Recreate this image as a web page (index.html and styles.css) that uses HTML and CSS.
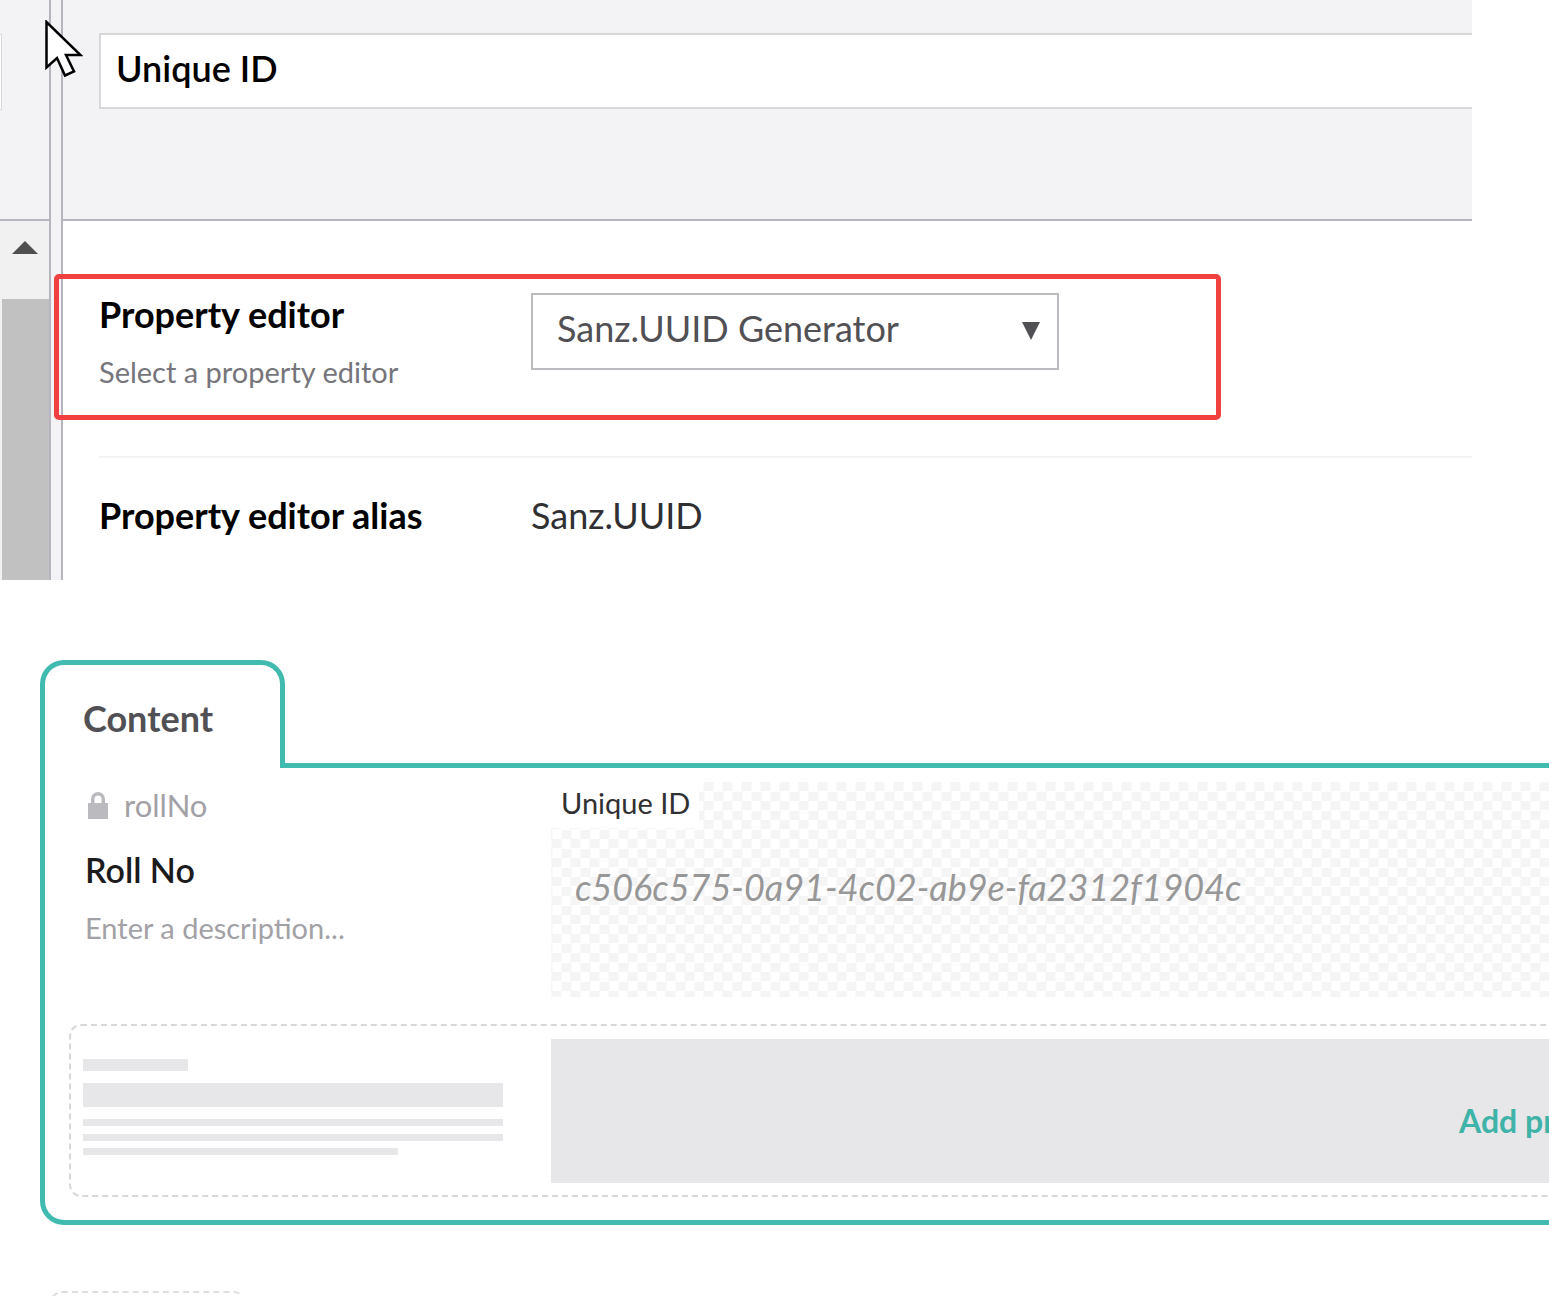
FILE: index.html
```html
<!DOCTYPE html>
<html lang="en">
<head>
  <meta charset="UTF-8">
  <title>Unique ID property editor</title>
  <link rel="stylesheet" href="styles.css">
</head>
<body>
  <section class="editor">
    <aside class="side">
      <div class="side-head"><div class="side-input"></div></div>
      <div class="side-scroll">
        <div class="scroll-up"></div>
        <div class="scroll-thumb"></div>
      </div>
    </aside>
    <div class="gutter"></div>
    <main class="pane">
      <div class="pane-head">
        <div class="name-input">Unique ID</div>
      </div>
      <div class="pane-body">
        <div class="row row-editor">
          <div class="row-label">
            <div class="row-title">Property editor</div>
            <div class="row-desc">Select a property editor</div>
          </div>
          <div class="select">
            <span class="select-text">Sanz.UUID Generator</span>
            <span class="select-arrow"></span>
          </div>
        </div>
        <div class="row row-alias">
          <div class="row-label"><div class="row-title">Property editor alias</div></div>
          <div class="row-value">Sanz.UUID</div>
        </div>
      </div>
    </main>
    <div class="highlight"></div>
    <svg class="cursor" width="38" height="58" viewBox="0 0 38 58">
      <path d="M1.5 2 V47.5 L12 38 L20 55.5 L29 51.5 L21 35 H35.5 Z" fill="#fff" stroke="#000" stroke-width="2.5"/>
    </svg>
  </section>

  <section class="doctype">
    <div class="tab-row">
      <div class="tab">Content</div>
      <div class="tab-line"></div>
    </div>
    <div class="group">
      <div class="prop">
        <div class="prop-label">
          <div class="prop-alias">
            <svg class="lock" width="22" height="28" viewBox="0 0 22 28">
              <path d="M1 12 H4 V8 A7 7 0 0 1 18 8 V12 H21 V28 H1 Z M7.5 12 H14.5 V8 A3.5 3.5 0 0 0 7.5 8 Z" fill="#bbbabf" fill-rule="evenodd"/>
            </svg>
            <span>rollNo</span>
          </div>
          <div class="prop-name">Roll No</div>
          <div class="prop-desc">Enter a description...</div>
        </div>
        <div class="prop-preview">
          <div class="preview-name">Unique ID</div>
          <div class="preview-value">c506c575-0a91-4c02-ab9e-fa2312f1904c</div>
        </div>
      </div>
      <div class="add-prop">
        <div class="ghost">
          <div class="ghost-bar g1"></div>
          <div class="ghost-bar g2"></div>
          <div class="ghost-bar g3"></div>
          <div class="ghost-bar g3 g4"></div>
          <div class="ghost-bar g5"></div>
        </div>
        <div class="add-block">Add property</div>
      </div>
    </div>
    <div class="next-tab"></div>
  </section>
</body>
</html>
```

FILE: styles.css
```css
html, body {
  margin: 0;
  padding: 0;
  height: 1296px;
  overflow: hidden;
  background: #fff;
}
body {
  font-family: 'Lato', sans-serif;
  color: #1b1b1d;
}

/* top screenshot */
.editor {
  position: relative;
  display: flex;
  width: 1472px;
  height: 580px;
  overflow: hidden;
}
.side {
  width: 49px;
  flex: none;
  border-right: 2px solid #b5b4bf;
  display: flex;
  flex-direction: column;
}
.side-head {
  height: 221px;
  padding-top: 34px;
  box-sizing: border-box;
  background: #f3f3f5;
  border-bottom: 2px solid #b5b4bf;
}
.side-input {
  width: 1px;
  height: 74px;
  background: #fff;
  border: 1px solid #d8d7d9;
  border-left: 0;
}
.side-scroll {
  flex: 1;
  background: #f1f1f1;
  display: flex;
  flex-direction: column;
  align-items: center;
}
.scroll-up {
  margin-top: 20px;
  width: 0;
  height: 0;
  border-left: 13px solid transparent;
  border-right: 13px solid transparent;
  border-bottom: 13px solid #505050;
}
.scroll-thumb {
  margin-top: 45px;
  margin-left: 2px;
  align-self: stretch;
  flex: 1;
  background: #c1c1c1;
}
.gutter {
  width: 10px;
  flex: none;
  background: #f3f3f5;
  border-right: 2px solid #b5b4bf;
}
.pane {
  flex: 1;
  min-width: 0;
}
.pane-head {
  height: 219px;
  background: #f3f3f5;
  border-bottom: 2px solid #b5b4bf;
  padding-left: 36px;
}
.name-input {
  position: relative;
  top: 33px;
  height: 72px;
  line-height: 66px;
  padding-left: 15px;
  background: #fff;
  border: 2px solid #d8d7d9;
  border-right: 0;
  font-size: 36px;
  font-weight: 600;
  color: #000;
}
.pane-body {
  padding-left: 36px;
}
.row {
  display: flex;
}
.row-editor {
  padding-top: 71px;
  height: 164px;
  border-bottom: 2px solid #f3f3f5;
}
.row-label {
  width: 432px;
  flex: none;
}
.row-title {
  font-size: 36px;
  font-weight: 700;
  line-height: 44px;
  color: #000;
}
.row-desc {
  margin-top: 18px;
  font-size: 29px;
  line-height: 36px;
  color: #75757b;
}
.select {
  width: 483px;
  height: 73px;
  border: 2px solid #bbbabf;
  display: flex;
  align-items: center;
  justify-content: space-between;
  padding: 0 17px 0 24px;
  margin-top: 1px;
  font-size: 36px;
  color: #515054;
}
.select-text {
  padding-bottom: 8px;
}
.select-arrow {
  width: 0;
  height: 0;
  margin-bottom: 2px;
  border-left: 9px solid transparent;
  border-right: 9px solid transparent;
  border-top: 18px solid #515054;
}
.row-alias {
  padding-top: 35px;
}
.row-value {
  font-size: 36px;
  line-height: 44px;
  color: #303033;
}
.highlight {
  position: absolute;
  left: 54px;
  top: 274px;
  width: 1167px;
  height: 146px;
  box-sizing: border-box;
  border: 5px solid #f04040;
  border-radius: 5px;
}
.cursor {
  position: absolute;
  left: 45px;
  top: 20px;
}

/* bottom screenshot */
.doctype {
  width: 1700px;
  padding: 80px 0 0 40px;
}
.tab-row {
  display: flex;
  height: 108px;
}
.tab {
  width: 245px;
  box-sizing: border-box;
  border: 5px solid #41bbb0;
  border-bottom: 0;
  border-radius: 24px 24px 0 0;
  padding: 31px 0 0 38px;
  font-size: 36px;
  font-weight: 700;
  line-height: 44px;
  color: #515054;
}
.tab-line {
  flex: 1;
  border-bottom: 5px solid #41bbb0;
}
.group {
  height: 452px;
  border-left: 5px solid #41bbb0;
  border-bottom: 5px solid #41bbb0;
  border-bottom-left-radius: 24px;
}
.prop {
  display: flex;
  height: 256px;
}
.prop-label {
  width: 506px;
  flex: none;
  padding: 19px 0 0 40px;
  box-sizing: border-box;
}
.prop-alias {
  display: flex;
  align-items: center;
  gap: 15px;
  height: 36px;
  padding-left: 2px;
  font-size: 31px;
  color: #a2a1a6;
}
.prop-name {
  margin-top: 26px;
  font-size: 34px;
  font-weight: 600;
  line-height: 42px;
  color: #1b1b1d;
}
.prop-desc {
  margin-top: 19px;
  font-size: 29px;
  line-height: 36px;
  color: #a2a1a6;
}
.prop-preview {
  flex: 1;
  margin-top: 14px;
  height: 215px;
  background: repeating-conic-gradient(#f5f5f5 0 25%, #fff 0 50%) 10.5px 0 / 19px 19px;
}
.preview-name {
  width: 138px;
  height: 46px;
  line-height: 42px;
  padding-left: 10px;
  background: #fff;
  font-size: 29px;
  color: #303033;
}
.preview-value {
  margin-top: 32px;
  padding-left: 24px;
  font-size: 36px;
  font-style: italic;
  line-height: 54px;
  color: #979797;
}
.add-prop {
  display: flex;
  width: 1700px;
  height: 173px;
  box-sizing: border-box;
  margin-left: 24px;
  border: 2px dashed #d8d7d9;
  border-radius: 12px;
  padding: 13px 0 0 12px;
}
.ghost {
  width: 468px;
  flex: none;
  padding-top: 20px;
}
.ghost-bar {
  background: #e7e7e9;
}
.g1 { width: 105px; height: 12px; }
.g2 { width: 420px; height: 24px; margin-top: 12px; }
.g3 { width: 420px; height: 7px; margin-top: 12px; }
.g4 { margin-top: 8px; }
.g5 { width: 315px; height: 7px; margin-top: 7px; }
.add-block {
  flex: 1;
  height: 144px;
  background: #e7e7e9;
  padding: 62px 0 0 908px;
  box-sizing: border-box;
  font-size: 32px;
  font-weight: 700;
  line-height: 40px;
  color: #3fb3a7;
  white-space: nowrap;
}
.next-tab {
  width: 196px;
  height: 40px;
  margin: 66px 0 0 10px;
  border: 2px dashed #dedee0;
  border-radius: 12px;
  box-sizing: border-box;
}
```
